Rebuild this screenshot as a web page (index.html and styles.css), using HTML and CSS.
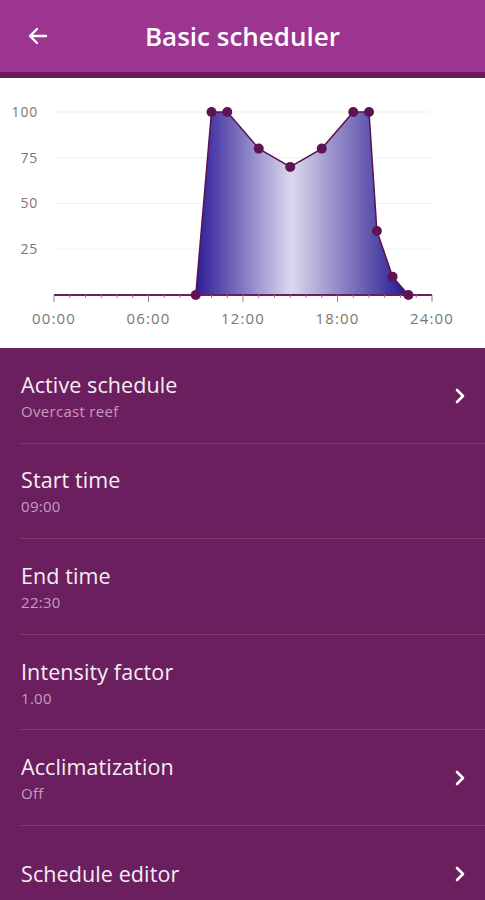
FILE: index.html
```html
<!DOCTYPE html>
<html lang="en">
<head>
  <meta charset="UTF-8" />
  <meta name="viewport" content="width=device-width, initial-scale=1" />
  <title>Basic scheduler</title>
  <link rel="stylesheet" href="styles.css">
</head>
<body>
  <div class="topbar">
    <button class="back" type="button" aria-label="Back">
      <svg width="24" height="24" viewBox="0 0 24 24"><path d="M20 12H5M11 5l-7 7 7 7" fill="none" stroke="#fff" stroke-width="2.4" stroke-linecap="round" stroke-linejoin="round"/></svg>
    </button>
    <h1>Basic scheduler</h1>
  </div>

  <div class="chart">
    <svg width="485" height="270" viewBox="0 0 485 270">
      <defs>
        <linearGradient id="fade" gradientUnits="userSpaceOnUse" x1="195" y1="0" x2="409" y2="0">
          <stop offset="0" stop-color="#2b1a98"/>
          <stop offset="0.45" stop-color="#dcd8ee"/>
          <stop offset="1" stop-color="#23148f"/>
        </linearGradient>
      </defs>

      <g class="grid">
        <line x1="56" y1="34" x2="430" y2="34"/>
        <line x1="56" y1="79.75" x2="430" y2="79.75"/>
        <line x1="56" y1="125.5" x2="430" y2="125.5"/>
        <line x1="56" y1="171.25" x2="430" y2="171.25"/>
      </g>

      <g class="ylabels">
        <text x="38" y="39">100</text>
        <text x="38" y="85">75</text>
        <text x="38" y="130">50</text>
        <text x="38" y="176">25</text>
      </g>

      <polygon class="area" points="195.75,217 211.5,34 227.25,34 258.75,70.6 290.25,88.9 321.75,70.6 353.25,34 369,34 376.9,153 392.6,198.7 408.4,217"/>

      <line class="axis" x1="54" y1="217" x2="432" y2="217"/>
      <g id="ticks" class="ticks"></g>

      <polyline class="curve" points="195.75,217 211.5,34 227.25,34 258.75,70.6 290.25,88.9 321.75,70.6 353.25,34 369,34 376.9,153 392.6,198.7 408.4,217"/>

      <g class="dots">
        <circle cx="195.75" cy="217" r="5"/>
        <circle cx="211.5" cy="34" r="5"/>
        <circle cx="227.25" cy="34" r="5"/>
        <circle cx="258.75" cy="70.6" r="5"/>
        <circle cx="290.25" cy="88.9" r="5"/>
        <circle cx="321.75" cy="70.6" r="5"/>
        <circle cx="353.25" cy="34" r="5"/>
        <circle cx="369" cy="34" r="5"/>
        <circle cx="376.9" cy="153" r="5"/>
        <circle cx="392.6" cy="198.7" r="5"/>
        <circle cx="408.4" cy="217" r="5"/>
      </g>

      <g class="xlabels">
        <text x="54" y="246">00:00</text>
        <text x="148.5" y="246">06:00</text>
        <text x="243" y="246">12:00</text>
        <text x="337.5" y="246">18:00</text>
        <text x="432" y="246">24:00</text>
      </g>
    </svg>
  </div>

  <ul class="settings">
    <li class="row">
      <div class="text">
        <div class="title">Active schedule</div>
        <div class="sub">Overcast reef</div>
      </div>
      <svg class="chev" width="12" height="18" viewBox="0 0 12 18"><path d="M3 3l6 6-6 6" fill="none" stroke="#fff" stroke-width="2.6" stroke-linecap="round" stroke-linejoin="round"/></svg>
    </li>
    <li class="row">
      <div class="text">
        <div class="title">Start time</div>
        <div class="sub">09:00</div>
      </div>
    </li>
    <li class="row">
      <div class="text">
        <div class="title">End time</div>
        <div class="sub">22:30</div>
      </div>
    </li>
    <li class="row">
      <div class="text">
        <div class="title">Intensity factor</div>
        <div class="sub">1.00</div>
      </div>
    </li>
    <li class="row">
      <div class="text">
        <div class="title">Acclimatization</div>
        <div class="sub">Off</div>
      </div>
      <svg class="chev" width="12" height="18" viewBox="0 0 12 18"><path d="M3 3l6 6-6 6" fill="none" stroke="#fff" stroke-width="2.6" stroke-linecap="round" stroke-linejoin="round"/></svg>
    </li>
    <li class="row">
      <div class="text">
        <div class="title">Schedule editor</div>
      </div>
      <svg class="chev" width="12" height="18" viewBox="0 0 12 18"><path d="M3 3l6 6-6 6" fill="none" stroke="#fff" stroke-width="2.6" stroke-linecap="round" stroke-linejoin="round"/></svg>
    </li>
  </ul>

<script>
  // hourly ticks under the time axis, longer every 6 hours
  const ticks = document.getElementById("ticks");
  for (let h = 0; h <= 24; h++) {
    const x = 54 + h * 15.75;
    const t = document.createElementNS("http://www.w3.org/2000/svg", "line");
    t.setAttribute("x1", x);
    t.setAttribute("x2", x);
    t.setAttribute("y1", 217);
    t.setAttribute("y2", h % 6 === 0 ? 224 : 220);
    ticks.appendChild(t);
  }
</script>
</body>
</html>
```

FILE: styles.css
```css
body {
  margin: 0;
  background: #6b1f5e;
  font-family: 'Open Sans', 'Lato', sans-serif;
  color: #fff;
}

.topbar {
  height: 72px;
  background: #9b3590;
  border-bottom: 6px solid #6a1a5d;
  display: flex;
  align-items: center;
  position: relative;
}

.back {
  background: none;
  border: none;
  padding: 0;
  margin-left: 26px;
  width: 24px;
  height: 24px;
  cursor: pointer;
}

.topbar h1 {
  position: absolute;
  left: 0;
  right: 0;
  margin: 0;
  text-align: center;
  font-size: 26px;
  font-weight: 600;
  pointer-events: none;
}

.chart {
  background: #fff;
  height: 270px;
}

.chart svg {
  display: block;
}

.grid line {
  stroke: #efefef;
  stroke-width: 1;
}

.ylabels text {
  text-anchor: end;
  font-size: 14px;
  letter-spacing: 0.8px;
  fill: #777;
}

.xlabels text {
  text-anchor: middle;
  font-size: 15px;
  letter-spacing: 1.2px;
  fill: #777;
}

.area {
  fill: url(#fade);
}

.axis {
  stroke: #6b1f5e;
  stroke-width: 2;
}

.ticks line {
  stroke: #888;
  stroke-width: 1;
}

.curve {
  fill: none;
  stroke: #5a1350;
  stroke-width: 1.5;
}

.dots circle {
  fill: #5e1452;
}

.settings {
  list-style: none;
  margin: 0;
  padding: 0;
}

.row {
  min-height: 95.6px;
  display: flex;
  align-items: center;
  justify-content: space-between;
  padding: 0 19px 0 21px;
  position: relative;
}

.row::after {
  content: "";
  position: absolute;
  left: 20px;
  right: 0;
  bottom: 0;
  height: 1px;
  background: rgba(255, 255, 255, 0.12);
}

.row:last-child::after {
  display: none;
}

.text {
  display: flex;
  flex-direction: column;
}

.title {
  font-size: 21.5px;
  line-height: 26px;
  letter-spacing: 0.1px;
  color: #f6eef5;
}

.sub {
  margin-top: 4px;
  font-size: 15px;
  line-height: 18px;
  letter-spacing: 0.3px;
  color: #c79bbf;
}
```
